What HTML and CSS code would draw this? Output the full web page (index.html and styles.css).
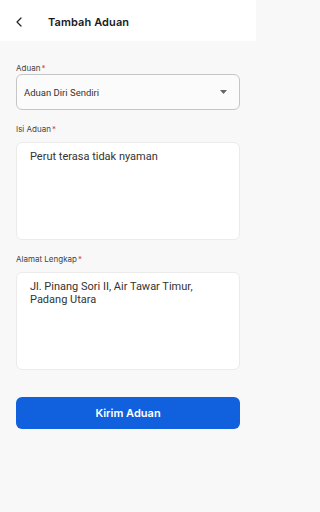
FILE: index.html
```html
<!DOCTYPE html>
<html lang="id">
<head>
<meta charset="utf-8">
<link rel="stylesheet" href="styles.css">
</head>
<body>
<div class="screen">
<header class="topbar">
  <svg class="back" width="6" height="10" viewBox="0 0 6 10"><path d="M5 1 L1 5 L5 9" fill="none" stroke="#222" stroke-width="1.2" stroke-linecap="round" stroke-linejoin="round"/></svg>
  <span class="title">Tambah Aduan</span>
</header>
<main class="form">
  <div class="field">
    <div class="label label-tight">Aduan<span class="req">*</span></div>
    <div class="select">
      <span>Aduan Diri Sendiri</span>
      <svg width="7" height="4" viewBox="0 0 7 4"><path d="M0 0 H7 L3.5 4 Z" fill="#666"/></svg>
    </div>
  </div>
  <div class="field field-gap">
    <div class="label">Isi Aduan<span class="req">*</span></div>
    <div class="area">Perut terasa tidak nyaman</div>
  </div>
  <div class="field field-gap">
    <div class="label">Alamat Lengkap<span class="req">*</span></div>
    <div class="area">Jl. Pinang Sori II, Air Tawar Timur, Padang Utara</div>
  </div>
  <button class="submit">Kirim Aduan</button>
</main>
</div>
</body>
</html>
```
FILE: styles.css
```css
html, body {
  margin: 0;
  padding: 0;
  background: #f8f8f8;
  height: 100%;
}
body {
  font-family: "Inter", "Noto Sans", sans-serif;
  color: #222;
}
.screen {
  width: 256px;
  min-height: 512px;
  background: #f8f8f8;
}
.topbar {
  height: 41px;
  background: #ffffff;
  display: flex;
  align-items: center;
  padding-left: 16px;
  box-sizing: border-box;
}
.back {
  margin-top: 2px;
}
.title {
  margin-left: 26px;
  font-size: 11px;
  font-weight: 600;
  color: #1a1a1a;
  letter-spacing: 0.1px;
  margin-top: 2px;
}
.form {
  padding: 21px 16px 0;
  display: flex;
  flex-direction: column;
}
.label {
  font-size: 8px;
  line-height: 12px;
  height: 12px;
  color: #444;
  margin-bottom: 7px;
}
.label-tight {
  margin-bottom: 0;
}
.req {
  color: #e53935;
  margin-left: 1px;
  font-size: 8px;
}
.field-gap {
  margin-top: 13px;
}
.select {
  height: 36px;
  box-sizing: border-box;
  border: 1px solid #c6c6c6;
  border-radius: 6px;
  background: #fbfbfb;
  display: flex;
  align-items: center;
  justify-content: space-between;
  padding: 0 12px 0 7px;
  font-family: "Roboto", sans-serif;
  font-size: 9.5px;
  color: #333;
}
.area {
  height: 98px;
  box-sizing: border-box;
  border: 1px solid #ebebeb;
  border-radius: 6px;
  background: #ffffff;
  padding: 8px 16px 0 13px;
  font-family: "Roboto", sans-serif;
  font-size: 11px;
  line-height: 12.5px;
  color: #333;
}
.submit {
  margin-top: 27px;
  height: 32px;
  border: none;
  border-radius: 6px;
  background: #1160dd;
  color: #ffffff;
  font-family: "Inter", sans-serif;
  font-size: 11px;
  font-weight: 600;
}
```
